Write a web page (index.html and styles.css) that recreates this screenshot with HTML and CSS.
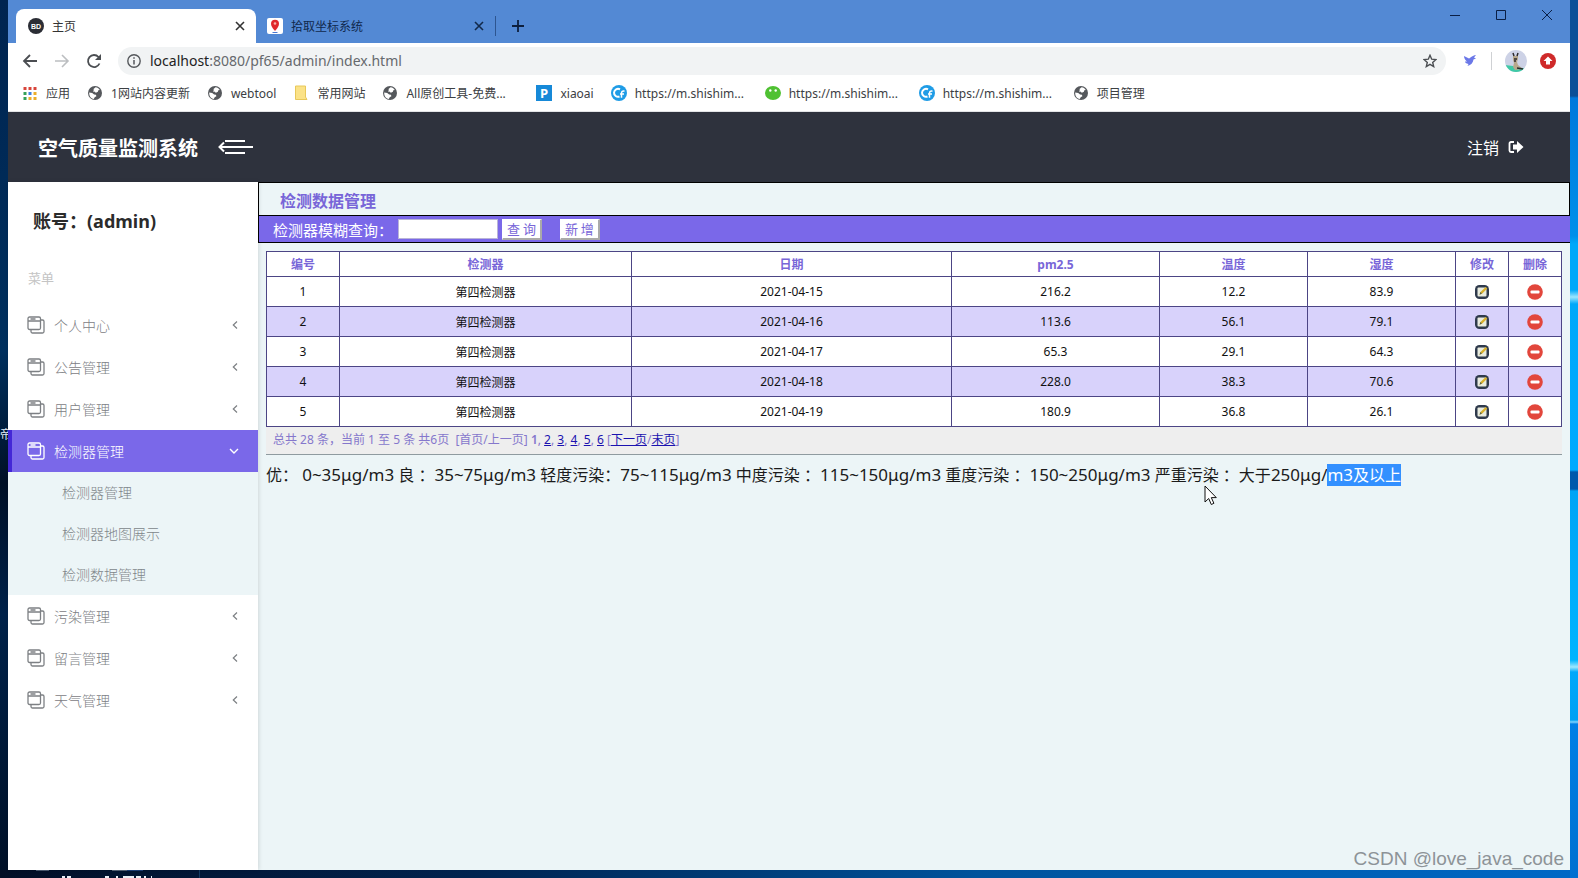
FILE: index.html
```
<!DOCTYPE html>
<html lang="zh-CN">
<head>
<meta charset="utf-8">
<title>主页</title>
<link rel="stylesheet" href="styles.css">
</head>
<body>
<svg class="defs" aria-hidden="true">
  <symbol id="globe" viewBox="0 0 16 16"><circle cx="8" cy="8" r="7" fill="#55585c"/><path d="M8.6 2.2c1.7.2 3.300 1.200 4.200 2.800l-1.500.3-.4 1.500-2 .9-1.600-1.200-1.300.3.800-1.800L6.500 4zM2.200 7.500l3 .600 1.900 1.400 1.800.3.500 1.400-1.700 1-.9 1.900C4 13.500 2 11 2.200 7.500z" fill="#fff"/></symbol>
  <symbol id="cf" viewBox="0 0 16 16"><circle cx="8" cy="8" r="8" fill="#1f9ce6"/><path d="M9 4.300A4 4 0 1 0 8.500 11.500" fill="none" stroke="#fff" stroke-width="2"/><path d="M13.500 6.200c-2-.6-3 .3-3 2v4.600M9 9h4" fill="none" stroke="#fff" stroke-width="1.500"/></symbol>
  <symbol id="pages" viewBox="0 0 18 18"><path d="M2.500 1H12a1.500 1.500 0 0 1 1.500 1.500V12a1.500 1.500 0 0 1-1.500 1.500H2.500A1.500 1.500 0 0 1 1 12V2.500A1.500 1.500 0 0 1 2.500 1zM1 5h12.500M3.500 3h5M13.500 4h2A1.500 1.500 0 0 1 17 5.500v10a1.500 1.500 0 0 1-1.500 1.500h-10A1.500 1.500 0 0 1 4 15.500v-2" fill="none" stroke="currentColor" stroke-width="1.300"/></symbol>
  <symbol id="left" viewBox="0 0 8 10"><path d="M6 1.500L2.300 5 6 8.500" fill="none" stroke="currentColor" stroke-width="1.200"/></symbol>
  <symbol id="edit" viewBox="0 0 16 16"><rect x="1" y="1" width="14" height="14" rx="4.500" fill="#2f3a4c"/><rect x="3.500" y="3.500" width="9" height="9" rx="1" fill="#e9ecdf"/><path d="M5.500 10.800l1-2.800 5.200-5 1.600 1.600-5 5z" fill="#d9b02c"/><path d="M5.500 10.800l1-2.800 1.400 1.600z" fill="#55604a"/></symbol>
  <symbol id="remove" viewBox="0 0 16 16"><circle cx="8" cy="8" r="7.800" fill="#e2463c"/><rect x="3.500" y="6.500" width="9" height="3" rx="1" fill="#fff"/></symbol>
</svg>
<div class="desktop">
  <span class="desk-label">帝</span>
  <svg class="desk-icons" width="200" height="9" viewBox="0 0 200 9" aria-hidden="true"><path d="M36 1h13" stroke="#8fa3b8" stroke-width="1"/><path d="M112 1h15" stroke="#a9b4bd" stroke-width="1"/><path d="M127 1h16" stroke="#3c6cc0" stroke-width="1"/><path d="M62 8h3M67 8h4M105 8h4M116 8h2M123 8h11M136 8h5M144 8h2M151 8h1" stroke="#e8eef5" stroke-width="2"/><path d="M199.500 1v8" stroke="#123a62"/></svg>
  <div class="window">
    <div class="tabstrip">
      <div class="tab active">
        <svg width="16" height="16" viewBox="0 0 16 16"><circle cx="8" cy="8" r="8" fill="#2b2d35"/><text x="8" y="11" text-anchor="middle" class="bd">BD</text></svg>
        <span class="tab-title">主页</span>
        <button class="plain" aria-label="关闭"><svg width="10" height="10" viewBox="0 0 10 10"><path d="M1 1l8 8M9 1l-8 8" stroke="#333" stroke-width="1.600"/></svg></button>
      </div>
      <div class="tab">
        <svg width="16" height="16" viewBox="0 0 16 16"><rect width="16" height="16" rx="2" fill="#fff"/><path d="M8 13C5 9.500 4 8 4 5.800a4 4 0 0 1 8 0C12 8 11 9.500 8 13z" fill="#e0282c"/><circle cx="8" cy="5.500" r="1.300" fill="#f7b0a8"/><path d="M5.500 14.500h5" stroke="#4a78d0"/></svg>
        <span class="tab-title">拾取坐标系统</span>
        <button class="plain" aria-label="关闭"><svg width="10" height="10" viewBox="0 0 10 10"><path d="M1 1l8 8M9 1l-8 8" stroke="#12294a" stroke-width="1.600"/></svg></button>
      </div>
      <button class="plain new-tab" aria-label="新标签页"><svg width="12" height="12" viewBox="0 0 12 12"><path d="M6 0v12M0 6h12" stroke="#0d1f3d" stroke-width="1.800"/></svg></button>
      <div class="controls">
        <button class="plain" aria-label="最小化"><svg width="12" height="12" viewBox="0 0 12 12"><path d="M1 6.500h10" stroke="#0a1f45"/></svg></button>
        <button class="plain" aria-label="最大化"><svg width="12" height="12" viewBox="0 0 12 12"><path d="M1.500 1.500h9v9h-9z" fill="none" stroke="#0a1f45"/></svg></button>
        <button class="plain" aria-label="关闭窗口"><svg width="12" height="12" viewBox="0 0 12 12"><path d="M1 1l10 10M11 1L1 11" stroke="#0a1f45"/></svg></button>
      </div>
    </div>
    <div class="toolbar">
      <button class="plain" aria-label="后退"><svg width="16" height="16" viewBox="0 0 16 16"><path d="M15 8H2M8 2L2 8l6 6" fill="none" stroke="#4b4e52" stroke-width="1.800"/></svg></button>
      <button class="plain" aria-label="前进"><svg width="16" height="16" viewBox="0 0 16 16"><path d="M1 8h13M8 2l6 6-6 6" fill="none" stroke="#bcbec1" stroke-width="1.600"/></svg></button>
      <button class="plain" aria-label="刷新"><svg width="16" height="16" viewBox="0 0 16 16"><path d="M13.500 10.500A6 6 0 1 1 12.500 4l1.500 1.500" fill="none" stroke="#4b4e52" stroke-width="1.800"/><path d="M15 1v6H9z" fill="#4b4e52"/></svg></button>
      <div class="omnibox">
        <svg width="14" height="14" viewBox="0 0 14 14"><circle cx="7" cy="7" r="6.200" fill="none" stroke="#55585c" stroke-width="1.400"/><path d="M7 6v4.500M7 3.300v1.500" stroke="#55585c" stroke-width="1.500"/></svg>
        <span class="url"><b>localhost</b>:8080/pf65/admin/index.html</span>
        <button class="plain" aria-label="收藏"><svg width="14" height="14" viewBox="0 0 14 14"><path d="M7 1.300l1.700 3.900 4.200.4-3.200 2.800 1 4.200L7 10.400l-3.700 2.200 1-4.200L1.100 5.600l4.200-.4z" fill="none" stroke="#4b4e52" stroke-width="1.400"/></svg></button>
      </div>
      <div class="extensions">
        <svg width="16" height="16" viewBox="0 0 16 16"><path d="M2 3l5 2.500C8.500 5 10 2.500 14 2l-2 2.500 2 1-2.500 1C11 10 9 12 5.500 13l1-2C4 10.500 3 9.500 3 8.500h2C3.500 7.500 2 5.500 2 3z" fill="#6b78e8"/></svg>
        <span class="divider"></span>
        <svg width="22" height="22" viewBox="0 0 22 22"><defs><clipPath id="face"><circle cx="11" cy="11" r="11"/></clipPath></defs><g clip-path="url(#face)"><path d="M0 0h22v22H0z" fill="#cdd2e6"/><path d="M0 15l8 1 14 3v4H0z" fill="#3fc9a6"/><path d="M8 4l1 2h3l1-2v5l-1 3 1 3 5 4-8 1-2-3 1-4-1-3z" fill="#b8a88c"/><path d="M8 3l1 3M13 3l-1 3M9 9h3M10 10v2M12 18l6 1" stroke="#2c2a2d" stroke-width="1.500"/></g></svg>
        <svg width="16" height="16" viewBox="0 0 16 16"><circle cx="8" cy="8" r="8" fill="#cf2a2a"/><path d="M8 3.500l4.500 4.500H10v3.500H6V8H3.500z" fill="#fff"/></svg>
      </div>
    </div>
    <nav class="bookmarks" aria-label="书签">
      <a href="#"><svg width="16" height="16" viewBox="0 0 16 16"><g fill="#d8453b"><path d="M1.500 2h3v3h-3z"/><path d="M6.500 2h3v3h-3z"/><path d="M11.500 2h3v3h-3z"/></g><path d="M1.500 7h3v3h-3zM1.500 12h3v3h-3z" fill="#35a058"/><path d="M6.500 7h3v3h-3z" fill="#3c7fe0"/><path d="M6.500 12h3v3h-3zM11.500 7h3v3h-3zM11.500 12h3v3h-3z" fill="#ecae2b"/></svg><span>应用</span></a>
      <a href="#"><svg width="16" height="16"><use href="#globe"/></svg><span>1网站内容更新</span></a>
      <a href="#"><svg width="16" height="16"><use href="#globe"/></svg><span>webtool</span></a>
      <a href="#"><svg width="16" height="16" viewBox="0 0 16 16"><path d="M2.500 1h10v11l1.500 2.500H2.500z" fill="#fbe287" stroke="#e8c85a"/></svg><span>常用网站</span></a>
      <a href="#" class="long"><svg width="16" height="16"><use href="#globe"/></svg><span>All原创工具-免费...</span></a>
      <a href="#"><svg width="16" height="16" viewBox="0 0 16 16"><rect width="16" height="16" fill="#1689d8"/><text x="8" y="13" text-anchor="middle" class="p-logo">P</text></svg><span>xiaoai</span></a>
      <a href="#" class="long"><svg width="16" height="16"><use href="#cf"/></svg><span>https://m.shishim...</span></a>
      <a href="#" class="long"><svg width="16" height="16" viewBox="0 0 16 16"><ellipse cx="8" cy="8" rx="8" ry="7" fill="#4fc132"/><circle cx="5.300" cy="5.500" r="1.200" fill="#fff"/><circle cx="10.700" cy="5.500" r="1.200" fill="#fff"/></svg><span>https://m.shishim...</span></a>
      <a href="#" class="long"><svg width="16" height="16"><use href="#cf"/></svg><span>https://m.shishim...</span></a>
      <a href="#"><svg width="16" height="16"><use href="#globe"/></svg><span>项目管理</span></a>
    </nav>
    <header class="app-header">
      <h1>空气质量监测系统</h1>
      <button class="plain" aria-label="收起菜单"><svg width="36" height="18" viewBox="0 0 36 18"><path d="M7 3h20M1 9h34M7 15h20M6 4.500L1.500 9 6 13.500" fill="none" stroke="#fff" stroke-width="2"/></svg></button>
      <a href="#" class="logout">注销 <svg width="16" height="14" viewBox="0 0 16 14"><path d="M6 2H3a1.500 1.500 0 0 0-1.500 1.500v7A1.500 1.500 0 0 0 3 12h3" fill="none" stroke="#fff" stroke-width="1.800"/><path d="M9 1l6.500 6L9 13V9.500H5v-5h4z" fill="#fff"/></svg></a>
    </header>
    <div class="app-body">
      <aside class="sidebar">
        <h2>账号：(admin)</h2>
        <p class="menu-head">菜单</p>
        <nav>
          <a href="#" class="item"><svg width="18" height="18"><use href="#pages"/></svg><span>个人中心</span><svg class="arrow" width="8" height="10"><use href="#left"/></svg></a>
          <a href="#" class="item"><svg width="18" height="18"><use href="#pages"/></svg><span>公告管理</span><svg class="arrow" width="8" height="10"><use href="#left"/></svg></a>
          <a href="#" class="item"><svg width="18" height="18"><use href="#pages"/></svg><span>用户管理</span><svg class="arrow" width="8" height="10"><use href="#left"/></svg></a>
          <a href="#" class="item current"><svg width="18" height="18"><use href="#pages"/></svg><span>检测器管理</span><svg class="arrow" width="10" height="8" viewBox="0 0 10 8"><path d="M1 2l4 4 4-4" fill="none" stroke="currentColor" stroke-width="1.400"/></svg></a>
          <div class="submenu">
            <a href="#">检测器管理</a>
            <a href="#">检测器地图展示</a>
            <a href="#">检测数据管理</a>
          </div>
          <a href="#" class="item"><svg width="18" height="18"><use href="#pages"/></svg><span>污染管理</span><svg class="arrow" width="8" height="10"><use href="#left"/></svg></a>
          <a href="#" class="item"><svg width="18" height="18"><use href="#pages"/></svg><span>留言管理</span><svg class="arrow" width="8" height="10"><use href="#left"/></svg></a>
          <a href="#" class="item"><svg width="18" height="18"><use href="#pages"/></svg><span>天气管理</span><svg class="arrow" width="8" height="10"><use href="#left"/></svg></a>
        </nav>
      </aside>
      <main>
        <h3>检测数据管理</h3>
        <form class="search">
          <label for="q">检测器模糊查询：</label>
          <input id="q" type="text">
          <button type="button">查 询</button>
          <button type="button" class="add">新 增</button>
        </form>
        <div class="content">
          <table>
            <colgroup><col class="c-id"><col class="c-name"><col class="c-date"><col class="c-pm"><col class="c-num"><col class="c-num"><col class="c-op"><col class="c-op"></colgroup>
            <thead><tr><th>编号</th><th>检测器</th><th>日期</th><th>pm2.5</th><th>温度</th><th>湿度</th><th>修改</th><th>删除</th></tr></thead>
            <tbody>
              <tr><td>1</td><td>第四检测器</td><td>2021-04-15</td><td>216.2</td><td>12.2</td><td>83.9</td><td><a href="#" aria-label="修改"><svg width="16" height="16"><use href="#edit"/></svg></a></td><td><a href="#" aria-label="删除"><svg width="16" height="16"><use href="#remove"/></svg></a></td></tr>
              <tr><td>2</td><td>第四检测器</td><td>2021-04-16</td><td>113.6</td><td>56.1</td><td>79.1</td><td><a href="#" aria-label="修改"><svg width="16" height="16"><use href="#edit"/></svg></a></td><td><a href="#" aria-label="删除"><svg width="16" height="16"><use href="#remove"/></svg></a></td></tr>
              <tr><td>3</td><td>第四检测器</td><td>2021-04-17</td><td>65.3</td><td>29.1</td><td>64.3</td><td><a href="#" aria-label="修改"><svg width="16" height="16"><use href="#edit"/></svg></a></td><td><a href="#" aria-label="删除"><svg width="16" height="16"><use href="#remove"/></svg></a></td></tr>
              <tr><td>4</td><td>第四检测器</td><td>2021-04-18</td><td>228.0</td><td>38.3</td><td>70.6</td><td><a href="#" aria-label="修改"><svg width="16" height="16"><use href="#edit"/></svg></a></td><td><a href="#" aria-label="删除"><svg width="16" height="16"><use href="#remove"/></svg></a></td></tr>
              <tr><td>5</td><td>第四检测器</td><td>2021-04-19</td><td>180.9</td><td>36.8</td><td>26.1</td><td><a href="#" aria-label="修改"><svg width="16" height="16"><use href="#edit"/></svg></a></td><td><a href="#" aria-label="删除"><svg width="16" height="16"><use href="#remove"/></svg></a></td></tr>
            </tbody>
          </table>
          <div class="pager">总共 28 条，当前 1 至 5 条 共6页&nbsp; [首页/上一页] <b>1</b>, <a href="#">2</a>, <a href="#">3</a>, <a href="#">4</a>, <a href="#">5</a>, <a href="#">6</a> [<a href="#">下一页</a>/<a href="#">末页</a>]</div>
          <hr>
          <p class="legend">优： <span>0~35μg/m3</span> 良 ：<span>35~75μg/m3</span> 轻度污染：<span>75~115μg/m3</span> 中度污染 ：<span>115~150μg/m3</span> 重度污染 ：<span>150~250μg/m3</span> 严重污染 ：大于<span>250μg/</span><mark><span>m3</span>及以上</mark></p>
        </div>
      </main>
    </div>
  </div>
  <svg class="cursor" width="14" height="21" viewBox="0 0 14 21" aria-hidden="true"><path d="M1 1v16l3.700-3.500 2.600 6 2.600-1.200-2.600-5.700h5z" fill="#fff" stroke="#111"/></svg>
  <span class="watermark">CSDN @love_java_code</span>
</div>
</body>
</html>
```
FILE: styles.css
```
* { box-sizing: border-box; }
body, h1, h2, h3, p { margin: 0; }
body { font-family: "Noto Sans", "Noto Sans CJK SC", sans-serif; font-size: 12px; color: #222; }
a { text-decoration: none; color: inherit; }
svg { display: block; flex: none; }
.defs { position: absolute; width: 0; height: 0; }
.plain { border: 0; background: none; padding: 0; display: flex; }

.desktop {
  position: relative; overflow: hidden; height: 100vh; padding: 0 8px 8px; display: flex;
  background:
    linear-gradient(#0a4f98 0, #0a4f98 96px, #0078dc 98px, #0090ea 236px, #00a8fa 244px, #00a8fa 290px, #9be6ff 297px, #00a8fa 304px, #00aaff 470px, #0058ac 472px, #0058ac 489px, #00a4f6 491px, #00b4ff 660px, #a0e8ff 667px, #00a8fa 672px, #00a0f4 720px, #7fd4ff 722px, #007fe6 724px, #0070d0 100%) right / 8px 100% no-repeat,
    linear-gradient(90deg, #020f26 0, #00234f 30%, #00539c 62%, #0068c6 100%) bottom / 100% 8px no-repeat,
    linear-gradient(#002450, #00305e 40%, #001026 55%, #00224a 70%, #001026);
}
.desk-label { position: absolute; left: 0; top: 426px; width: 12px; color: #e6edf5; line-height: 18px; }
.desk-icons { position: absolute; left: 0; bottom: 0; }
.window { position: relative; flex: 1; min-width: 0; display: flex; flex-direction: column; background: #fff; }

.tabstrip { height: 43px; padding: 9px 17px 0 8px; display: flex; background: #5389d4; }
.tab { display: flex; align-items: center; width: 240px; padding: 0 11px 0 12px; color: #10284c; }
.tab.active { background: #fff; border-radius: 8px 8px 0 0; color: #333; }
.tab-title { flex: 1; padding-left: 8px; }
.tab:not(.active) { border-right: 1px solid #2d5590; padding-left: 11px; height: 20px; margin-top: 7px; }
.new-tab { align-self: center; margin-left: 16px; }
.controls { margin-left: auto; display: flex; gap: 34px; }
.bd { font: bold 7px "Liberation Sans", sans-serif; fill: #fff; }
.p-logo { font: bold 13px "Open Sans", sans-serif; fill: #fff; }

.toolbar { height: 35px; padding: 0 14px; display: flex; align-items: center; gap: 16px; }
.omnibox { flex: 1; height: 28px; border-radius: 14px; background: #f1f3f4; padding: 0 9px; display: flex; align-items: center; gap: 9px; }
.url { flex: 1; font-size: 14px; color: #66696d; }
.url b { font-weight: 400; color: #222; }
.extensions { display: flex; align-items: center; gap: 13px; }
.divider { width: 1px; height: 18px; background: #cfd1d4; }

.bookmarks { height: 34px; padding: 0 14px 3px; display: flex; align-items: center; gap: 17px; border-bottom: 1px solid #e2e4e6; color: #3c4043; white-space: nowrap; }
.bookmarks a { display: flex; align-items: center; gap: 8px; }
.bookmarks .long { width: 137px; }

.app-header { height: 70px; padding: 0 46px 0 30px; display: flex; align-items: center; gap: 20px; background: #2e323d; color: #fff; }
.app-header h1 { font-size: 20px; font-weight: 700; }
.logout { margin-left: auto; display: flex; align-items: center; gap: 9px; font-size: 16px; }

.app-body { flex: 1; min-height: 0; display: flex; background: #ecf5f7; }
.sidebar { width: 250px; flex: none; background: #fff; box-shadow: 1px 0 4px rgba(0, 0, 0, .12); }
.sidebar h2 { padding: 25px 25px 0; font-size: 18px; line-height: 28px; font-weight: 700; color: #2b2b2b; }
.menu-head { padding: 31px 20px 14px; font-size: 13px; line-height: 24px; color: #c4c4c4; }
.item { display: flex; align-items: center; height: 42px; padding: 0 19px 0 19px; gap: 9px; font-size: 14px; color: #7d8084; }
.item span { font-weight: 300; }
.item .arrow { margin-left: auto; }
.item.current { background: #7a68e9; color: #fff; border-left: 4px solid #4327d6; padding-left: 15px; }
.submenu { background: #ecf5f7; color: #80868a; }
.submenu a { display: block; padding-left: 54px; font-size: 14px; line-height: 41px; font-weight: 300; }

main { flex: 1; min-width: 0; }
main h3 { height: 34px; border: 1px solid #000; padding: 0 21px; font-size: 16px; line-height: 36px; font-weight: 700; color: #7866d8; }
.search { height: 27px; display: flex; align-items: center; padding: 0 14px; background: #7a68e9; border: solid #000; border-width: 0 0 1px 1px; color: #fff; font-size: 15px; }
.search input { width: 100px; height: 20px; margin-left: 5px; padding: 0 4px; border: 1px solid #b9b4d8; background: #fff; }
.search button { height: 21px; margin-left: 4px; padding: 0 4px; border: solid; border-width: 1px 2px 2px 1px; border-color: #fff #aaa #aaa #fff; background: #fff; color: #7866d8; font: 13px/18px "Noto Sans CJK SC", sans-serif; }
.search .add { margin-left: 18px; }
.content { padding: 8px; }
table { width: 100%; border-collapse: collapse; table-layout: fixed; background: #fff; font-size: 12px; text-align: center; color: #111; }
th, td { border: 1px solid #4c4585; padding: 0; }
th { height: 25px; color: #7866d8; }
td { height: 30px; }
td svg { margin: 0 auto; }
tbody tr:nth-child(even) { background: #d8d2fb; }
.c-id { width: 73px; }
.c-name { width: 292px; }
.c-date { width: 320px; }
.c-pm { width: 208px; }
.c-num { width: 148px; }
.c-op { width: 53px; }
.pager { height: 27px; padding: 0 7px; line-height: 25px; background: #eee; color: #8577cc; white-space: nowrap; }
.pager a { color: #1a12b0; text-decoration: underline; }
.pager b { font-weight: 600; }
hr { margin: 0; border: 0; border-top: 1px solid #8f9ba0; }
.legend { padding-top: 8px; font-size: 16px; line-height: 24px; color: #1b1b1b; }
.legend span { font-size: 17px; }
.legend mark { background: #3390ff; color: #fff; }
.cursor { position: absolute; left: 1204px; top: 485px; }
.watermark { position: absolute; right: 14px; bottom: 7px; font: 19px/24px "Liberation Sans", sans-serif; color: #8d9397; }
```
